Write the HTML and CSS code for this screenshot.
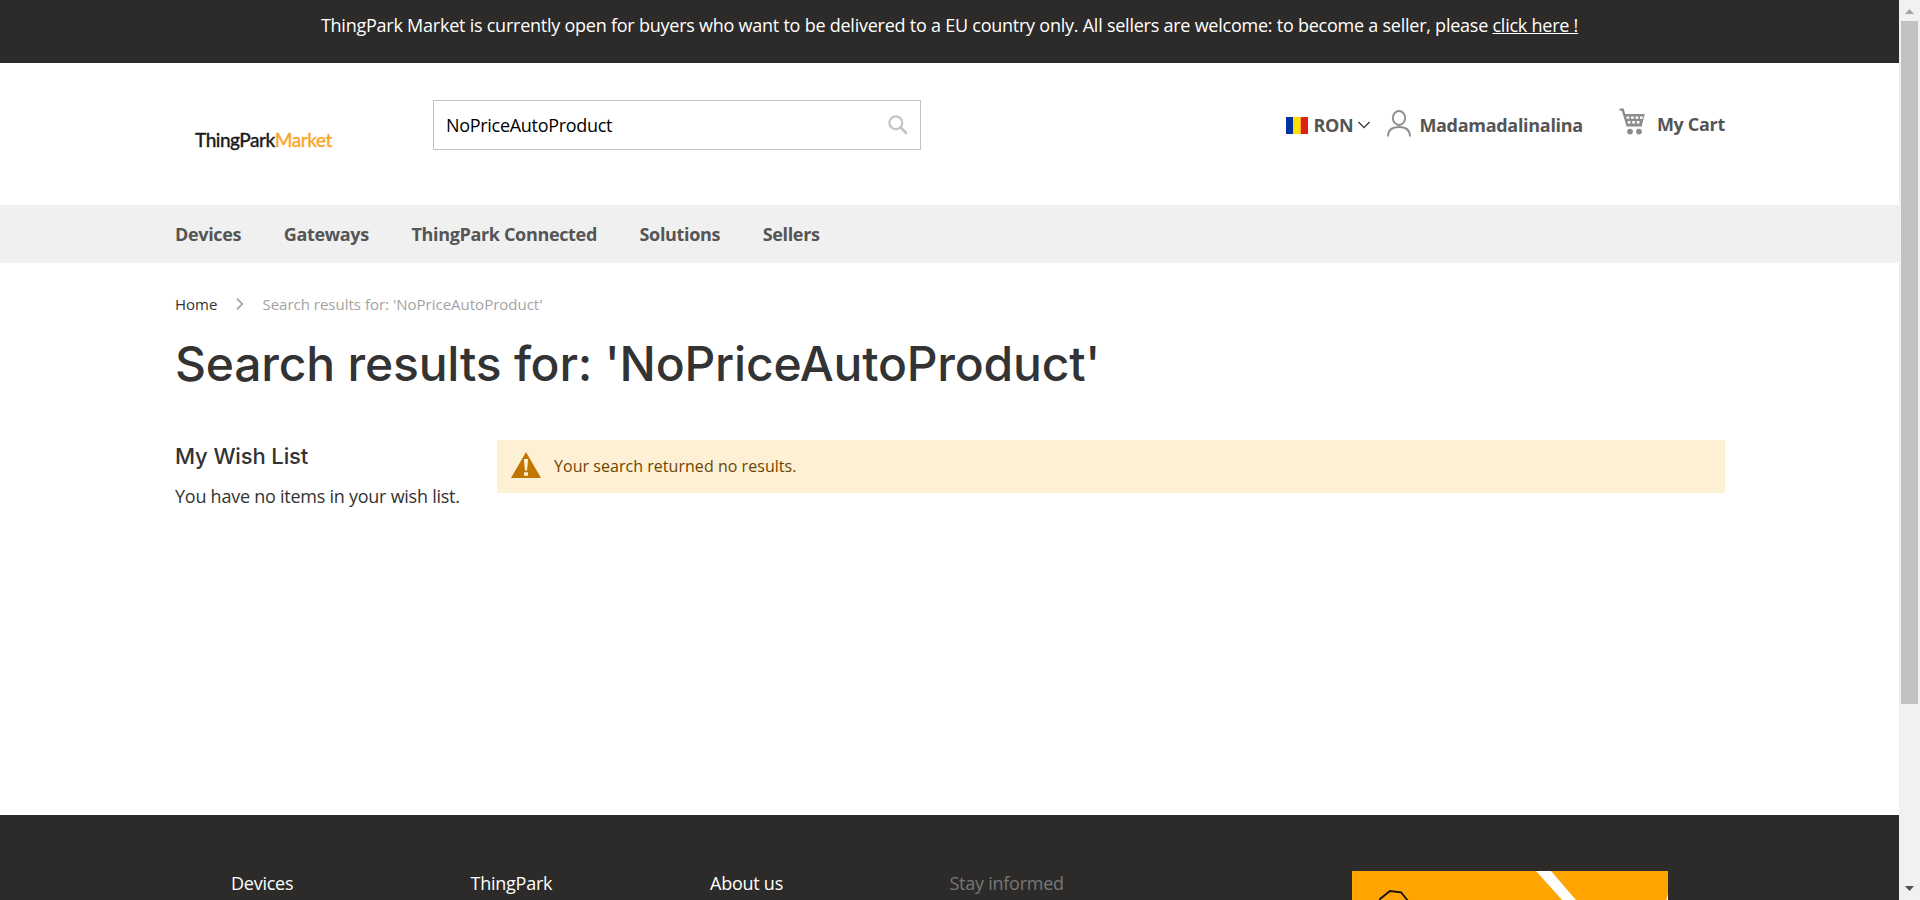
FILE: index.html
```html
<!DOCTYPE html>
<html lang="en">
<head>
<meta charset="utf-8">
<title>Search results for: 'NoPriceAutoProduct'</title>
<link rel="stylesheet" href="styles.css">
</head>
<body>
<div class="window">
<div class="page">
  <div class="banner"><p class="banner-text">ThingPark Market is currently open for buyers who want to be delivered to a EU country only. All sellers are welcome: to become a seller, please <a class="banner-link" href="#">click here !</a></p></div>
  <header class="header">
    <a class="logo" href="#">ThingPark<span class="logo-accent">Market</span></a>
    <div class="search">
      <span class="search-value">NoPriceAutoProduct</span>
      <svg class="search-icon" width="20" height="20" viewBox="0 0 20 20" fill="none" stroke="#c4c4c4"><circle cx="7.8" cy="7.8" r="6.4" stroke-width="2.2"/><path d="M12.6 12.6L18 17.8" stroke-width="2.8" stroke-linecap="round"/></svg>
    </div>
    <div class="tools">
      <svg class="flag" width="22" height="17" viewBox="0 0 22 17"><path fill="#00319c" d="M0 0h7.3v17H0z"/><path fill="#ffde00" d="M7.3 0h7.4v17H7.3z"/><path fill="#de2110" d="M14.7 0H22v17h-7.3z"/></svg>
      <span class="currency">RON</span>
      <svg class="caret" width="12" height="8" viewBox="0 0 12 8" fill="none" stroke="#333" stroke-width="1.300"><path d="M.5 1L6 6.600 11.500 1"/></svg>
      <svg class="user" width="24" height="27" viewBox="0 0 24 27" fill="none" stroke="#8f8f8f" stroke-width="1.900"><ellipse cx="12" cy="8" rx="6.200" ry="7"/><path d="M1 26.500C1 20.500 5 17 12 17s11 3.500 11 9.500"/></svg>
      <span class="account">Madamadalinalina</span>
      <svg class="cart" width="26" height="27" viewBox="0 0 26 27"><path fill="none" stroke="#8c8c8c" stroke-width="2.400" d="M.5 1.600h3.200L8.500 17.400H23"/><path fill="#8c8c8c" d="M4.500 6h21.300l-3.100 11.800H8z"/><path stroke="#fff" stroke-width="2.400" stroke-dasharray="2.800 1.700" d="M7.500 9.600H24M8.700 14.200H22"/><circle cx="11" cy="23.600" r="2.900" fill="#8c8c8c"/><circle cx="20" cy="23.600" r="2.900" fill="#8c8c8c"/></svg>
      <span class="cart-label">My Cart</span>
    </div>
  </header>
  <nav class="nav"><a>Devices</a><a>Gateways</a><a>ThingPark Connected</a><a>Solutions</a><a>Sellers</a></nav>
  <main class="main">
    <div class="crumbs"><a class="crumb-home">Home</a><svg class="crumb-sep" width="8" height="12" viewBox="0 0 8 12" fill="none" stroke="#999" stroke-width="1.600"><path d="M1 .8L6.300 6 1 11.200"/></svg><span class="crumb-current">Search results for: 'NoPriceAutoProduct'</span></div>
    <h1 class="title">Search results for: 'NoPriceAutoProduct'</h1>
    <div class="columns">
      <aside class="sidebar">
        <h2 class="wish-title">My Wish List</h2>
        <p class="wish-text">You have no items in your wish list.</p>
      </aside>
      <div class="notice">
        <svg class="warn" width="30" height="26" viewBox="0 0 30 26"><path fill="#c07600" d="M15 0l15 26H0z"/><path fill="#fdf0d5" d="M12.900 7h4.200l-1 11.500h-2.200zM13.100 20.300h3.800v3.500h-3.800z"/></svg>
        <span class="notice-text">Your search returned no results.</span>
      </div>
    </div>
  </main>
  <footer class="footer">
    <div class="foot-links"><span>Devices</span><span>ThingPark</span><span>About us</span><span class="muted">Stay informed</span></div>
    <svg class="promo" width="316" height="30" viewBox="0 0 316 30"><path fill="#ffa400" d="M0 0h316v30H0z"/><path fill="#fff" d="M184 0h15l25 29v1h-13zM316 23v7h-2z"/><path fill="none" stroke="#111" stroke-width="1.800" d="M28 29v-1l10-8 11 1.300 6.500 8"/></svg>
  </footer>
</div>
<div class="scrollbar">
  <svg class="arrow" width="9" height="5" viewBox="0 0 9 5"><path fill="#a3a3a3" d="M4.500 0L9 5H0z"/></svg>
  <div class="thumb"></div>
  <svg class="arrow" width="9" height="5" viewBox="0 0 9 5"><path fill="#505050" d="M0 0h9L4.500 5z"/></svg>
</div>
</div>
</body>
</html>
```
FILE: styles.css
```css
* { box-sizing: border-box; }
body { margin: 0; font-family: "Open Sans", sans-serif; font-size: 18px; color: #333; background: #fff; overflow: hidden; }
h1, h2, p { margin: 0; }
a { color: inherit; text-decoration: none; }
svg { display: block; flex: none; }
.window { display: flex; height: 900px; }
.page { width: 1899px; height: 900px; display: flex; flex-direction: column; overflow: hidden; white-space: nowrap; }
.banner { height: 63px; flex: none; background: #2d2b29; color: #fff; text-align: center; padding-top: 12px; }
.banner-text { line-height: 26px; letter-spacing: -0.24px; }
.banner-link { text-decoration: underline; }
.header { height: 142px; flex: none; padding: 0 174px 0 195px; display: flex; align-items: flex-start; }
.logo { width: 238px; padding-top: 62px; font: 500 19px/30px Lato, sans-serif; letter-spacing: -0.48px; color: #1c1c1c; -webkit-text-stroke: 0.3px currentColor; }
.logo-accent { color: #f9a72b; }
.search { width: 488px; height: 50px; margin-top: 37px; border: 1px solid #c2c2c2; padding: 0 12px; display: flex; align-items: center; justify-content: space-between; color: #000; }
.search-value { font-size: 18px; letter-spacing: -0.3px; }
.tools { margin-left: auto; height: 50px; margin-top: 37px; display: flex; align-items: center; font-weight: 700; letter-spacing: -0.3px; color: #555; }
.currency { margin: 0 5px 0 5px; }
.caret { margin-right: 17px; }
.user { margin: -4px 8px 0 0; }
.account { margin-right: 36px; }
.cart { margin: -7px 12px 0 0; }
.cart-label { margin-top: -2px; }
.nav { height: 58px; flex: none; background: #f0f0f0; padding-left: 175px; display: flex; align-items: center; gap: 42.6px; font-weight: 700; letter-spacing: -0.34px; color: #555; }
.main { height: 552px; flex: none; padding: 0 174px 0 175px; }
.crumbs { display: flex; align-items: center; padding-top: 29px; font-size: 15px; line-height: 24px; }
.crumb-sep { margin: 0 18px 0 19px; }
.crumb-current { color: #a3a3a3; }
.title { margin-top: 15px; font: 500 48px/66px Inter, sans-serif; letter-spacing: -0.2px; }
.columns { display: flex; margin-top: 43px; }
.sidebar { width: 322px; }
.wish-title { font: 500 22px/30px Inter, sans-serif; letter-spacing: -0.12px; margin-top: 1px; }
.wish-text { margin-top: 12px; line-height: 26px; letter-spacing: -0.25px; }
.notice { flex: 1; height: 53px; background: #fdf0d5; color: #6f4400; padding-left: 14px; display: flex; align-items: center; font-size: 16px; }
.notice-text { margin-top: -2px; letter-spacing: 0.04px; }
.warn { margin: -3px 13px 0 0; }
.footer { flex: 1; background: #2d2b29; color: #fff; padding: 56px 231px 0; display: flex; justify-content: space-between; }
.foot-links { display: grid; grid-template-columns: repeat(4, 239.5px); margin-top: -1px; line-height: 26px; letter-spacing: -0.25px; }
.muted { color: #777; }
.scrollbar { width: 21px; background: #f1f1f1; display: flex; flex-direction: column; align-items: center; justify-content: space-between; padding: 9px 1px 9px 0; }
.thumb { width: 17px; height: 683px; margin: 7px 0 auto; background: #c1c1c1; }
```
